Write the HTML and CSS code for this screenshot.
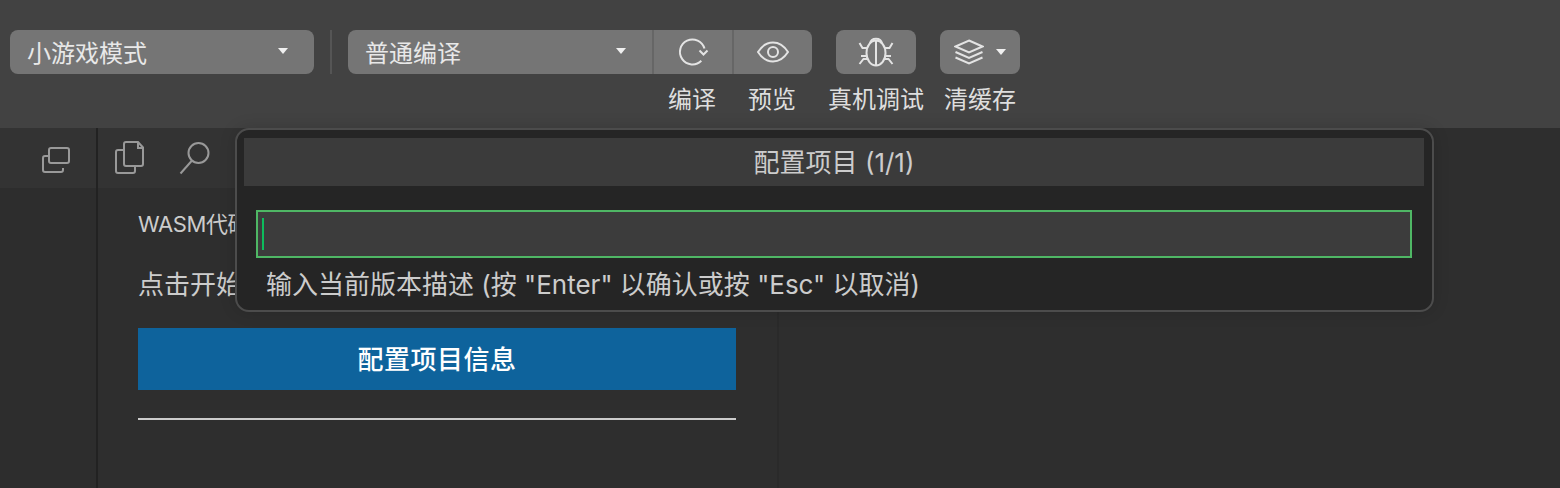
FILE: index.html
```html
<!DOCTYPE html>
<html lang="zh-CN">

<head>
    <meta charset="UTF-8">
    <title>配置项目</title>
    <link rel="stylesheet" href="styles.css">
</head>

<body>
    <div class="toolbar">
        <div class="select select-mode">
            <span>小游戏模式</span>
            <i class="caret"></i>
        </div>
        <div class="toolbar-divider"></div>
        <div class="compile-group">
            <div class="select select-compile">
                <span>普通编译</span>
                <i class="caret"></i>
            </div>
            <div class="tool tool-joined">
                <div class="tool-btn">
                    <svg width="32" height="32" viewBox="0 0 32 32">
                        <path d="M27.500 12.600A12.500 12.500 0 1 0 24.300 24.800" />
                        <path d="M22.500 14.500l4 4 4-4" />
                    </svg>
                </div>
                <div class="tool-label">编译</div>
            </div>
            <div class="tool tool-joined tool-last">
                <div class="tool-btn">
                    <svg width="34" height="24" viewBox="0 0 34 24">
                        <path d="M2 12C6.500 5 11 2.500 17 2.500S27.500 5 32 12c-4.500 7-9 9.500-15 9.500S6.500 19 2 12z" />
                        <circle cx="17" cy="12" r="5" />
                    </svg>
                </div>
                <div class="tool-label">预览</div>
            </div>
        </div>
        <div class="tool tool-debug">
            <div class="tool-btn tool-btn-single">
                <svg width="36" height="32" viewBox="0 0 36 32">
                    <ellipse cx="18" cy="17" rx="9.500" ry="12.500" />
                    <path d="M18 5v24" />
                    <path d="M12 7.500C13 1 23 1 24 7.500" />
                    <path d="M1.500 7l3 5h5M34.500 7l-3 5h-5" />
                    <path d="M3 20h6M33 20h-6" />
                    <path d="M1.500 28l4-5h4M34.500 28l-4-5h-4" />
                </svg>
            </div>
            <div class="tool-label">真机调试</div>
        </div>
        <div class="tool tool-cache">
            <div class="tool-btn tool-btn-single">
                <svg width="30" height="26" viewBox="0 0 30 26">
                    <path d="M15 1.500L28.500 7.500 15 13.500 1.500 7.500z" />
                    <path d="M1.500 13L15 19l13.500-6" />
                    <path d="M1.500 18.500L15 24.500l13.500-6" />
                </svg>
                <i class="caret caret-cache"></i>
            </div>
            <div class="tool-label">清缓存</div>
        </div>
    </div>

    <div class="workspace">
        <div class="rail">
            <div class="rail-head">
                <svg width="30" height="30" viewBox="0 0 30 30">
                    <rect x="8" y="5" width="20" height="15" rx="2" />
                    <path d="M8 13H4a2 2 0 0 0-2 2v12a2 2 0 0 0 2 2h16a2 2 0 0 0 2-2v-2" />
                </svg>
            </div>
        </div>
        <div class="sidebar">
            <div class="sidebar-head">
                <svg width="32" height="34" viewBox="0 0 32 34">
                    <path d="M10 3a2 2 0 0 1 2-2h12l5 5.500V23a2 2 0 0 1-2 2H12a2 2 0 0 1-2-2z" />
                    <path d="M24 1v6h5" />
                    <path d="M10 9H4a2 2 0 0 0-2 2v19a2 2 0 0 0 2 2h15a2 2 0 0 0 2-2v-5" />
                </svg>
                <svg class="icon-search" width="34" height="34" viewBox="0 0 34 34">
                    <circle cx="19.500" cy="12" r="10" />
                    <path d="M13 19.500L1.500 32.500" />
                </svg>
            </div>
            <div class="sidebar-body">
                <p class="wasm-text">WASM代码</p>
                <p class="start-text">点击开始</p>
                <button class="config-btn">配置项目信息</button>
                <hr class="sidebar-line">
            </div>
        </div>
        <div class="editor"></div>
    </div>

    <div class="quick-input">
        <div class="quick-title">配置项目 (1/1)</div>
        <div class="quick-field"><i class="cursor"></i></div>
        <div class="quick-help">输入当前版本描述 (按 "Enter" 以确认或按 "Esc" 以取消)</div>
    </div>
</body>

</html>
```

FILE: styles.css
```css
body {
    font-family: 'Inter', 'Noto Sans CJK SC', sans-serif;
    background-color: #2e2e2e;
    color: #cccccc;
    margin: 0;
    width: 1560px;
    height: 488px;
    overflow: hidden;
    position: relative;
}

svg {
    fill: none;
    stroke: #e4e4e4;
    stroke-width: 2;
    display: block;
}

/* toolbar */
.toolbar {
    height: 128px;
    box-sizing: border-box;
    background-color: #424242;
    padding: 30px 0 0 10px;
    display: flex;
    align-items: flex-start;
}

.select {
    height: 44px;
    background-color: #757575;
    color: #e8e8e8;
    font-size: 24px;
    display: flex;
    align-items: center;
    justify-content: space-between;
    box-sizing: border-box;
    padding: 0 26px 2px 17px;
}

.select-mode {
    width: 304px;
    border-radius: 8px;
}

.select-compile {
    width: 304px;
    border-radius: 8px 0 0 8px;
}

.caret {
    width: 0;
    height: 0;
    border-left: 5px solid transparent;
    border-right: 5px solid transparent;
    border-top: 6px solid #f0f0f0;
}

.caret-cache {
    margin-left: 12px;
}

.toolbar-divider {
    width: 2px;
    height: 44px;
    background-color: #555555;
    margin: 0 16px;
}

.compile-group {
    display: flex;
}

.tool {
    display: flex;
    flex-direction: column;
    align-items: center;
    width: 80px;
}

.tool-btn {
    width: 100%;
    height: 44px;
    background-color: #757575;
    display: flex;
    align-items: center;
    justify-content: center;
    box-sizing: border-box;
}

.tool-joined .tool-btn {
    border-left: 2px solid #666666;
}

.tool-last .tool-btn {
    border-radius: 0 8px 8px 0;
}

.tool-btn-single {
    border-radius: 8px;
}

.tool-debug {
    margin-left: 24px;
}

.tool-cache {
    margin-left: 24px;
}

.tool-label {
    font-size: 24px;
    line-height: 34px;
    margin-top: 9px;
    color: #dedede;
    white-space: nowrap;
}

/* main area */
.workspace {
    display: flex;
    height: 360px;
}

.rail {
    width: 96px;
    border-right: 2px solid #222222;
    background-color: #2d2d2d;
}

.rail-head {
    height: 60px;
    background-color: #333333;
    display: flex;
    align-items: center;
    padding-left: 41px;
    box-sizing: border-box;
}

.rail-head svg,
.sidebar-head svg {
    stroke: #999999;
}

.sidebar {
    width: 679px;
    border-right: 2px solid #2a2a2a;
}

.sidebar-head {
    height: 60px;
    background-color: #333333;
    display: flex;
    align-items: center;
    padding-left: 16px;
    box-sizing: border-box;
}

.icon-search {
    margin-left: 33px;
}

.sidebar-body {
    padding: 0 40px;
}

.wasm-text {
    font-size: 22px;
    line-height: 28px;
    letter-spacing: -0.4px;
    margin: 22px 0 0;
}

.start-text {
    font-size: 26px;
    line-height: 34px;
    margin: 30px 0 0;
}

.config-btn {
    display: block;
    width: 598px;
    height: 62px;
    margin-top: 26px;
    padding: 0 0 4px;
    border: none;
    background-color: #0e639c;
    color: #ffffff;
    font-family: inherit;
    font-size: 26px;
    font-weight: 500;
    letter-spacing: 0.5px;
}

.sidebar-line {
    width: 598px;
    height: 2px;
    margin: 28px 0 0;
    border: none;
    background-color: #cccccc;
}

.editor {
    flex: 1;
}

/* popup over the workspace */
.quick-input {
    position: absolute;
    left: 235px;
    top: 128px;
    width: 1199px;
    height: 184px;
    box-sizing: border-box;
    border: 2px solid #4c4c4c;
    border-radius: 14px;
    background-color: #252525;
    padding: 8px 8px 0 7px;
    box-shadow: 0 0 16px rgba(0, 0, 0, 0.15);
}

.quick-title {
    height: 48px;
    line-height: 50px;
    background-color: #3b3b3b;
    text-align: center;
    font-size: 26px;
    color: #cccccc;
}

.quick-field {
    height: 48px;
    box-sizing: border-box;
    margin: 24px 12px 0;
    border: 2px solid #4fb765;
    background-color: #3c3c3c;
    padding: 6px 0 0 4px;
}

.cursor {
    display: block;
    width: 2px;
    height: 32px;
    background-color: #0dbc5c;
}

.quick-help {
    font-size: 26px;
    line-height: 34px;
    margin: 10px 0 0 22px;
    color: #cccccc;
}
```
